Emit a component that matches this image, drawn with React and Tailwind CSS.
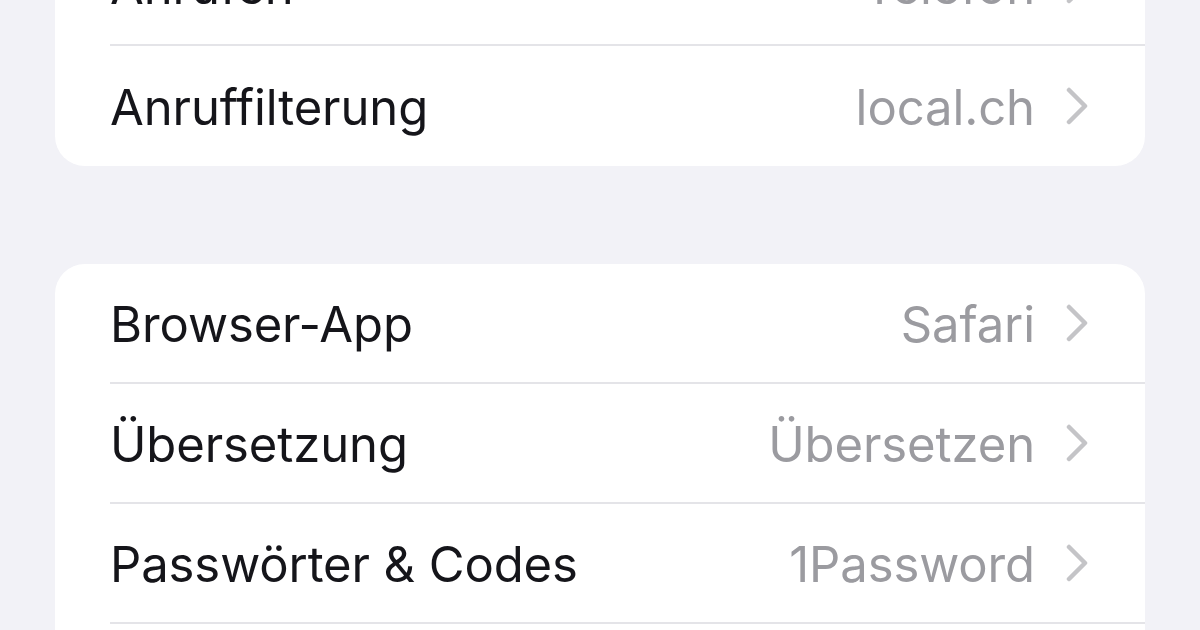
const groups = [
  [
    { label: 'Anrufen', value: 'Telefon' },
    { label: 'Anruffilterung', value: 'local.ch' },
  ],
  [
    { label: 'Browser-App', value: 'Safari' },
    { label: 'Übersetzung', value: 'Übersetzen' },
    { label: 'Passwörter & Codes', value: '1Password' },
    { label: 'Tastaturen', value: 'Tastaturen' },
  ],
];

function Chevron() {
  return (
    <svg width="24" height="38" viewBox="0 0 24 38" fill="none" className="shrink-0">
      <path d="M4 3 L20 19 L4 35" stroke="#c4c4c7" strokeWidth="4.5" strokeLinecap="round" strokeLinejoin="round" />
    </svg>
  );
}

function Row({ label, value, last }) {
  return (
    <div className="flex items-stretch pl-[55px]">
      <div className={`flex flex-1 items-center h-[120px] pr-[56px] ${last ? '' : 'border-b-2 border-[#e4e4e8]'}`}>
        <span className="flex-1 pt-[3px] text-[49px] text-[#15151a] tracking-[-0.1px]">{label}</span>
        <span className="pt-[3px] text-[49px] text-[#9b9ba0] tracking-[-0.1px] mr-[30px]">{value}</span>
        <Chevron />
      </div>
    </div>
  );
}

export default function App() {
  return (
    <div
      className="w-[1200px] h-[630px] overflow-hidden bg-[#f2f2f7]"
      style={{ fontFamily: 'Inter, "Noto Sans", sans-serif' }}
    >
      <div className="-mt-[74px] px-[55px] flex flex-col gap-[98px]">
        {groups.map((rows, gi) => (
          <div key={gi} className="bg-white rounded-[30px] overflow-hidden">
            {rows.map((r, i) => (
              <Row key={r.label} {...r} last={i === rows.length - 1} />
            ))}
          </div>
        ))}
      </div>
    </div>
  );
}
